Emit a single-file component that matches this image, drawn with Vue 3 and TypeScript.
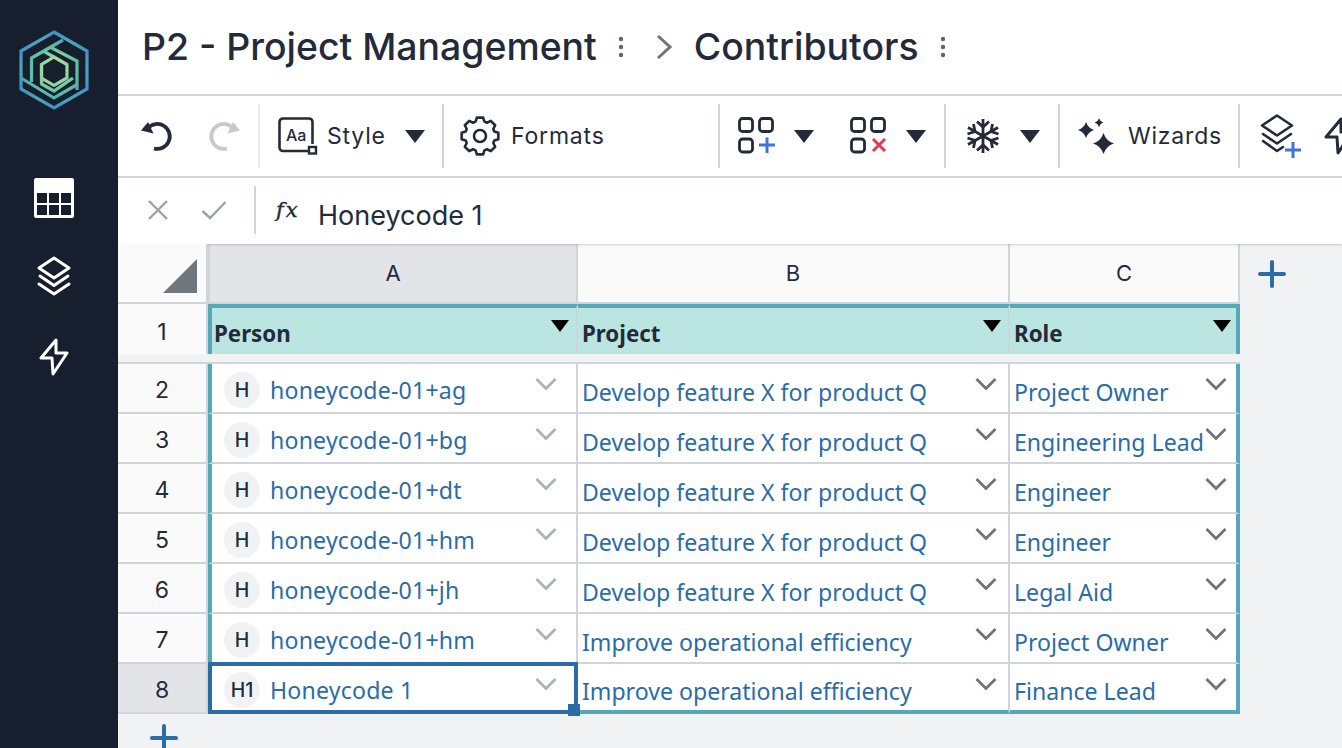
<template>
  <div class="app">
    <aside class="rail">
      <svg class="logo" viewBox="16 28 76 84" fill="none">
        <defs>
          <radialGradient id="logo-grad" gradientUnits="userSpaceOnUse" cx="54" cy="70" r="40">
            <stop offset="15%" stop-color="#c6e59b" />
            <stop offset="55%" stop-color="#62c3a4" />
            <stop offset="100%" stop-color="#3b8cc9" />
          </radialGradient>
        </defs>
        <g stroke="url(#logo-grad)" stroke-width="3.2" stroke-linejoin="miter">
          <path d="M54 32 87 51V89L54 108 21 89V51Z" />
          <path d="M54 57 67 64.5V78L54 85.500 41.500 78V64.500Z" />
          <path d="M63 40 31.500 58V82" />
          <path d="M50 47 77 61V90" />
          <path d="M44 51.500 54 57" />
          <path d="M21 78 54 98 78 84" />
          <path d="M41.500 64V84L54 91 73 78" />
        </g>
      </svg>
      <svg class="rail-icon rail-icon--table" viewBox="0 0 40 40">
        <path fill="#fff" fill-rule="evenodd" d="M2 0H38A2 2 0 0 1 40 2V38A2 2 0 0 1 38 40H2A2 2 0 0 1 0 38V2A2 2 0 0 1 2 0ZM3 15V25H13V15ZM15 15V25H25V15ZM27 15V25H37V15ZM3 27V37H13V27ZM15 27V37H25V27ZM27 27V37H37V27Z" />
      </svg>
      <svg class="rail-icon rail-icon--layers" viewBox="0 0 34 40" fill="none" stroke="#fff" stroke-width="3" stroke-linejoin="round" stroke-linecap="round">
        <path d="M17 2 32 12 17 22 2 12Z" />
        <path d="M3 20 17 29.500 31 20" />
        <path d="M2 28 17 38 32 28" />
      </svg>
      <svg class="rail-icon rail-icon--bolt" viewBox="0 0 30 38" fill="none" stroke="#fff" stroke-width="3" stroke-linejoin="round">
        <path d="M17 2 2 20H13L14 36 28 15H17Z" />
      </svg>
    </aside>

    <main class="main">
      <header class="titlebar">
        <h1 class="title">P2 - Project Management</h1>
        <svg class="kebab" viewBox="0 0 6 22"><circle cx="3" cy="3" r="2.200" /><circle cx="3" cy="11" r="2.200" /><circle cx="3" cy="19" r="2.200" /></svg>
        <svg class="crumb" viewBox="0 0 16 26" fill="none" stroke="#6f747c" stroke-width="3"><path d="M2 2 14 13 2 24" /></svg>
        <h1 class="title">Contributors</h1>
        <svg class="kebab" viewBox="0 0 6 22"><circle cx="3" cy="3" r="2.200" /><circle cx="3" cy="11" r="2.200" /><circle cx="3" cy="19" r="2.200" /></svg>
      </header>

      <div class="toolbar">
        <div class="group group--history">
          <svg class="ic32" viewBox="0 0 32 32" fill="none" stroke="#232b3a" stroke-width="3.800">
            <path d="M7 8A12.500 12.500 0 1 1 13 28.500" />
            <path fill="#232b3a" stroke="none" d="M0 10.500 7 2 12.500 13.500Z" />
          </svg>
          <svg class="ic32" viewBox="0 0 32 32" fill="none" stroke="#c6c9cd" stroke-width="3.800">
            <path d="M25 8A12.500 12.500 0 1 0 19 28.500" />
            <path fill="#c6c9cd" stroke="none" d="M32 10.500 25 2 19.500 13.500Z" />
          </svg>
        </div>
        <div class="group group--style">
          <svg class="ic-style" viewBox="0 0 40 38" fill="none">
            <path stroke="#232b3a" stroke-width="2.600" d="M30 34H5A3.500 3.500 0 0 1 1.500 30.500V5A3.500 3.500 0 0 1 5 1.500H31A3.500 3.500 0 0 1 34.500 5V27" />
            <text x="8" y="24" class="aa">Aa</text>
            <rect x="31" y="30" width="7" height="6.500" stroke="#232b3a" stroke-width="2.400" />
          </svg>
          <span class="tool-label">Style</span>
          <i class="caret caret--style"></i>
        </div>
        <div class="group group--formats">
          <svg class="ic-gear" viewBox="0 0 40 40" fill="none" stroke="#232b3a" stroke-width="2.600" stroke-linejoin="round">
            <circle cx="20" cy="20" r="6" />
            <path :d="gearPath" />
          </svg>
          <span class="tool-label">Formats</span>
        </div>
        <div class="group group--rows">
          <svg class="ic-grid" viewBox="0 0 38 38" fill="none">
            <g stroke="#232b3a" stroke-width="2.800">
              <rect x="1.500" y="1.500" width="13" height="13" rx="3" />
              <rect x="21.500" y="1.500" width="13" height="13" rx="3" />
              <rect x="1.500" y="22" width="13" height="13" rx="3" />
            </g>
            <path stroke="#3f74d8" stroke-width="3" d="M21 28H37M29 20.500V36" />
          </svg>
          <i class="caret"></i>
          <svg class="ic-grid ic-grid--del" viewBox="0 0 38 38" fill="none">
            <g stroke="#232b3a" stroke-width="2.800">
              <rect x="1.500" y="1.500" width="13" height="13" rx="3" />
              <rect x="21.500" y="1.500" width="13" height="13" rx="3" />
              <rect x="1.500" y="22" width="13" height="13" rx="3" />
            </g>
            <path stroke="#dd3a56" stroke-width="3" d="M23 22 35 34M35 22 23 34" />
          </svg>
          <i class="caret"></i>
        </div>
        <div class="group group--freeze">
          <svg class="ic-snow" viewBox="0 0 34 36" fill="none" stroke="#232b3a" stroke-width="2.800">
            <path d="M17 1V35M2 9.500 32 26.500M32 9.500 2 26.500" />
            <path d="M11 3.500 17 9 23 3.500M11 32.500 17 27 23 32.500" />
            <path d="M1.500 16 9 13.500 7.500 6M32.500 16 25 13.500 26.500 6" />
            <path d="M1.500 20 9 22.500 7.500 30M32.500 20 25 22.500 26.500 30" />
          </svg>
          <i class="caret caret--freeze"></i>
        </div>
        <div class="group group--wizards">
          <svg class="ic-spark" viewBox="0 0 36 36" fill="#232b3a">
            <path d="M25.500 15Q28 23 36 25.500 28 28 25.500 36 23 28 15 25.500 23 23 25.500 15Z" />
            <path d="M8 4Q10 10 16 12 10 14 8 20 6 14 0 12 6 10 8 4Z" />
            <path d="M21 0Q22 3.500 25.500 4.500 22 5.500 21 9.500 20 5.500 16.500 4.500 20 3.500 21 0Z" />
          </svg>
          <span class="tool-label">Wizards</span>
        </div>
        <div class="group group--last">
          <svg class="ic-addlayer" viewBox="0 0 42 44" fill="none">
            <g stroke="#232b3a" stroke-width="2.600" stroke-linejoin="round" stroke-linecap="round">
              <path d="M17 1.500 32 11.500 17 21.500 2 11.500Z" />
              <path d="M3 20 17 29.500 31 20" />
              <path d="M3 27 17 37 23 33" />
            </g>
            <path stroke="#3f74d8" stroke-width="3" d="M25 36H41M33 28V44" />
          </svg>
          <svg class="ic-clipbolt" viewBox="0 0 30 38" fill="none" stroke="#232b3a" stroke-width="3" stroke-linejoin="round">
            <path d="M17 2 2 20H13L14 36 28 15H17Z" />
          </svg>
        </div>
      </div>

      <div class="formula">
        <svg class="fx-btn" viewBox="0 0 22 22" fill="none" stroke="#9ea1a5" stroke-width="2.400"><path d="M2 2 20 20M20 2 2 20" /></svg>
        <svg class="fx-btn" viewBox="0 0 26 22" fill="none" stroke="#9ea1a5" stroke-width="2.400"><path d="M1.500 12 9 19 24.500 3" /></svg>
        <span class="fx-sep"></span>
        <span class="fx">fx</span>
        <span class="fx-value">Honeycode 1</span>
      </div>

      <section class="sheet">
        <div class="corner"><i class="corner-tri"></i></div>
        <div class="col-head col-head--on">A</div>
        <div class="col-head">B</div>
        <div class="col-head">C</div>
        <div class="add-col"><svg class="plus" viewBox="0 0 28 28" fill="none" stroke="#2a6ca8" stroke-width="4" stroke-linecap="round"><path d="M2 14H26M14 2V26" /></svg></div>

        <div class="row-num row-num--head">1</div>
        <div v-for="(h, i) in headers" :key="h" class="hcell" :class="{ 'hcell--first': i === 0, 'hcell--last': i === 2 }">
          <span>{{ h }}</span>
          <i class="hcaret"></i>
        </div>
        <div class="blank"></div>

        <div class="strip"></div>

        <template v-for="(r, idx) in rows" :key="idx">
          <div class="row-num" :class="{ 'row-num--on': idx === rows.length - 1 }">{{ idx + 2 }}</div>
          <div class="cell cell--first" :class="{ 'cell--sel': idx === rows.length - 1 }">
            <span class="avatar">{{ r.initials }}</span>
            <span class="person">{{ r.person }}</span>
            <svg class="chev chev--light" viewBox="0 0 22 14" fill="none"><path d="M1.500 2 11 11.500 20.500 2" /></svg>
            <i v-if="idx === rows.length - 1" class="handle"></i>
          </div>
          <div class="cell cell--text" :class="{ 'cell--bottom': idx === rows.length - 1 }">
            <span class="link">{{ r.project }}</span>
            <svg class="chev" viewBox="0 0 22 14" fill="none"><path d="M1.500 2 11 11.500 20.500 2" /></svg>
          </div>
          <div class="cell cell--text cell--last" :class="{ 'cell--bottom': idx === rows.length - 1 }">
            <span class="link">{{ r.role }}</span>
            <svg class="chev" viewBox="0 0 22 14" fill="none"><path d="M1.500 2 11 11.500 20.500 2" /></svg>
          </div>
          <div class="blank"></div>
        </template>
        <div class="add-row"><svg class="plus" viewBox="0 0 28 28" fill="none" stroke="#2a6ca8" stroke-width="4" stroke-linecap="round"><path d="M2 14H26M14 2V26" /></svg></div>
      </section>
    </main>
  </div>
</template>

<script setup lang="ts">
interface Row {
  initials: string
  person: string
  project: string
  role: string
}

const headers = ['Person', 'Project', 'Role']

const featureX = 'Develop feature X for product Q'
const efficiency = 'Improve operational efficiency'

const rows: Row[] = [
  { initials: 'H', person: 'honeycode-01+ag', project: featureX, role: 'Project Owner' },
  { initials: 'H', person: 'honeycode-01+bg', project: featureX, role: 'Engineering Lead' },
  { initials: 'H', person: 'honeycode-01+dt', project: featureX, role: 'Engineer' },
  { initials: 'H', person: 'honeycode-01+hm', project: featureX, role: 'Engineer' },
  { initials: 'H', person: 'honeycode-01+jh', project: featureX, role: 'Legal Aid' },
  { initials: 'H', person: 'honeycode-01+hm', project: efficiency, role: 'Project Owner' },
  { initials: 'H1', person: 'Honeycode 1', project: efficiency, role: 'Finance Lead' },
]

// 8 teeth round the centre of the 40x40 icon
const gearPath = (() => {
  const pts: string[] = []
  for (let i = 0; i < 8; i++) {
    const a = (i * Math.PI) / 4 - Math.PI / 2
    const offsets: [number, number][] = [
      [-0.3, 15],
      [-0.17, 18.6],
      [0.17, 18.6],
      [0.3, 15],
    ]
    for (const [da, r] of offsets) {
      pts.push(`${(20 + r * Math.cos(a + da)).toFixed(2)} ${(20 + r * Math.sin(a + da)).toFixed(2)}`)
    }
  }
  return `M${pts.join(' ')}Z`
})()
</script>

<style>
html,
body {
  margin: 0;
  height: 748px;
  overflow: hidden;
  background: #f1f2f4;
}
</style>

<style scoped>
.app {
  display: flex;
  height: 748px;
  overflow: hidden;
  font-family: Inter, "Liberation Sans", sans-serif;
  color: #232b3a;
}
.rail {
  flex: 0 0 118px;
  background: #171e2d;
  display: flex;
  flex-direction: column;
  align-items: center;
  padding: 28px 10px 0 0;
  box-sizing: border-box;
}
.logo {
  width: 76px;
  height: 84px;
  flex: none;
}
.rail-icon {
  display: block;
  flex: none;
}
.rail-icon--table {
  width: 40px;
  height: 40px;
  margin-top: 66px;
}
.rail-icon--layers {
  width: 34px;
  height: 40px;
  margin-top: 38px;
}
.rail-icon--bolt {
  width: 30px;
  height: 38px;
  margin-top: 42px;
}

.main {
  flex: 1;
  min-width: 0;
  display: flex;
  flex-direction: column;
}
.titlebar {
  flex: none;
  height: 96px;
  box-sizing: border-box;
  border-bottom: 2px solid #d1d4d8;
  background: #fff;
  display: flex;
  align-items: center;
  padding-left: 24px;
}
.title {
  margin: 0;
  font-size: 37.4px;
  font-weight: 500;
  line-height: 44px;
  color: #232b3a;
  white-space: nowrap;
}
.kebab {
  width: 6px;
  height: 22px;
  margin-left: 21px;
  fill: #5f646d;
}
.crumb {
  width: 16px;
  height: 26px;
  margin: 0 22px 0 32px;
}

.toolbar {
  flex: none;
  height: 82px;
  box-sizing: border-box;
  border-bottom: 2px solid #d1d4d8;
  background: #fff;
  display: flex;
  align-items: center;
  overflow: hidden;
}
.group {
  height: 64px;
  box-sizing: border-box;
  flex: none;
  display: flex;
  align-items: center;
  border-right: 2px solid #d1d4d8;
}
.group--history {
  width: 142px;
  padding-left: 23px;
  gap: 35px;
  border-right-color: #e9eaec;
}
.group--style {
  width: 184px;
  padding-left: 18px;
}
.group--formats {
  width: 276px;
  padding-left: 16px;
}
.group--rows {
  width: 226px;
  padding-left: 18px;
}
.group--freeze {
  width: 114px;
  padding-left: 20px;
}
.group--wizards {
  width: 180px;
  padding-left: 18px;
}
.group--last {
  flex: 1;
  padding-left: 20px;
  border-right: 0;
}
.ic32 {
  width: 32px;
  height: 32px;
}
.ic-style {
  width: 40px;
  height: 38px;
  flex: none;
}
.aa {
  font-family: Inter, "Liberation Sans", sans-serif;
  font-size: 16px;
  font-weight: 500;
  fill: #232b3a;
}
.tool-label {
  font-size: 23px;
  line-height: 30px;
  letter-spacing: 0.8px;
  color: #232b3a;
  margin-left: 9px;
  white-space: nowrap;
}
.caret {
  flex: none;
  width: 0;
  height: 0;
  border-left: 10px solid transparent;
  border-right: 10px solid transparent;
  border-top: 13px solid #232b3a;
  margin-left: 18px;
}
.caret--style {
  margin-left: 19px;
}
.caret--freeze {
  margin-left: 20px;
}
.ic-gear {
  width: 40px;
  height: 40px;
  flex: none;
}
.group--formats .tool-label {
  margin-left: 11px;
}
.ic-grid {
  width: 38px;
  height: 38px;
  flex: none;
}
.ic-grid--del {
  margin-left: 36px;
}
.ic-snow {
  width: 34px;
  height: 36px;
  flex: none;
}
.ic-spark {
  width: 36px;
  height: 36px;
  flex: none;
}
.group--wizards .tool-label {
  margin-left: 14px;
}
.ic-addlayer {
  width: 42px;
  height: 44px;
  flex: none;
}
.ic-clipbolt {
  width: 30px;
  height: 38px;
  flex: none;
  margin-left: 22px;
}

.formula {
  flex: none;
  height: 66px;
  box-sizing: border-box;
  background: #fff;
  box-shadow: 0 1px 2px rgba(0, 0, 0, 0.18);
  position: relative;
  display: flex;
  align-items: center;
  padding-left: 29px;
}
.fx-btn {
  width: 22px;
  height: 22px;
  flex: none;
  margin-top: -2px;
}
.fx-btn + .fx-btn {
  width: 26px;
  margin-left: 32px;
}
.fx-sep {
  width: 2px;
  height: 48px;
  background: #d1d4d8;
  margin-left: 27px;
  margin-top: -2px;
}
.fx {
  font-family: "DejaVu Serif", "Liberation Serif", serif;
  font-style: italic;
  font-size: 21px;
  letter-spacing: 2px;
  -webkit-text-stroke: 0.4px #232b3a;
  margin: -3px 0 0 20px;
  width: 29px;
  color: #232b3a;
}
.fx-value {
  font-size: 27px;
  margin: 8px 0 0 13px;
}

.sheet {
  flex: 1;
  min-height: 0;
  overflow: hidden;
  display: grid;
  grid-template-columns: 90px 370px 432px 230px 1fr;
  grid-template-rows: 60px 50px 10px repeat(7, 50px) 1fr;
  background: #f1f2f4;
  font-family: "Noto Sans", "Open Sans", sans-serif;
}
.corner {
  background: #fafafa;
  border-right: 2px solid #d1d4d8;
  border-bottom: 2px solid #d1d4d8;
  position: relative;
}
.corner-tri {
  position: absolute;
  right: 9px;
  bottom: 9px;
  width: 0;
  height: 0;
  border-left: 34px solid transparent;
  border-bottom: 34px solid #6f767e;
}
.col-head {
  background: #fafafa;
  border-right: 2px solid #d1d4d8;
  border-bottom: 2px solid #d1d4d8;
  display: flex;
  align-items: center;
  justify-content: center;
  font-family: Inter, sans-serif;
  font-size: 22px;
  color: #232b3a;
  box-sizing: border-box;
}
.col-head--on {
  background: #e2e4e8;
  border-left: 2px solid #d1d4d8;
}
.add-col {
  padding: 16px 0 0 18px;
}
.plus {
  width: 28px;
  height: 28px;
  display: block;
}
.row-num {
  background: #fafafa;
  border-right: 2px solid #d1d4d8;
  border-bottom: 2px solid #d1d4d8;
  display: flex;
  align-items: center;
  justify-content: center;
  font-family: Inter, sans-serif;
  font-size: 23px;
  color: #232b3a;
  box-sizing: border-box;
  padding-top: 3px;
}
.row-num--head {
  padding-top: 6px;
  border-bottom: 0;
}
.row-num--on {
  background: #e2e4e8;
}
.hcell {
  background: #bbe5e1;
  border-top: 4px solid #54a8b7;
  border-right: 2px solid #d1d4d8;
  box-sizing: border-box;
  position: relative;
  display: flex;
  align-items: center;
  padding: 4px 0 0 4px;
  font-size: 22.300px;
  font-weight: 700;
  color: #232b3a;
}
.hcell--first {
  border-left: 4px solid #54a8b7;
  padding-left: 2px;
}
.hcell--last {
  border-right: 4px solid #54a8b7;
}
.hcaret {
  position: absolute;
  top: 12px;
  right: 7px;
  width: 0;
  height: 0;
  border-left: 9.500px solid transparent;
  border-right: 9.500px solid transparent;
  border-top: 12px solid #000;
}
.hcell--last .hcaret {
  right: 5px;
}
.blank {
  min-width: 0;
}
.strip {
  grid-column: 1 / 6;
  box-sizing: border-box;
  background: linear-gradient(#f1f2f4 8px, #d1d4d8 8px);
  margin-right: 102px;
}
.cell {
  background: #fff;
  border-right: 2px solid #d1d4d8;
  border-bottom: 2px solid #d1d4d8;
  box-sizing: border-box;
  position: relative;
  display: flex;
  align-items: center;
  min-width: 0;
}
.cell--first {
  border-left: 4px solid #54a8b7;
  padding: 4px 0 0 12px;
}
.cell--text {
  padding: 7px 0 0 4px;
}
.cell--last {
  border-right: 4px solid #54a8b7;
}
.cell--bottom {
  border-bottom: 4px solid #54a8b7;
}
.cell--sel {
  border: 4px solid #2a6ca8;
  margin-top: -2px;
  padding-left: 12px;
  z-index: 2;
}
.avatar {
  flex: none;
  width: 36px;
  height: 36px;
  border-radius: 50%;
  background: #f1f2f4;
  display: flex;
  align-items: center;
  justify-content: center;
  font-family: Inter, sans-serif;
  font-size: 19.500px;
  font-weight: 500;
  color: #232b3a;
}
.person {
  font-size: 23.100px;
  letter-spacing: 0.2px;
  color: #2a6ca8;
  margin-left: 10px;
  white-space: nowrap;
}
.link {
  font-size: 23.100px;
  color: #2a6ca8;
  white-space: nowrap;
}
.chev {
  position: absolute;
  top: 13px;
  right: 11px;
  width: 22px;
  height: 14px;
  stroke: #6f747c;
  stroke-width: 2.800;
}
.cell--last .chev {
  right: 9px;
}
.chev--light {
  stroke: #aeb1b6;
  right: 19px;
}
.cell--sel .chev--light {
  top: 11px;
  right: 17px;
}
.handle {
  position: absolute;
  right: -6px;
  bottom: -6px;
  width: 12px;
  height: 12px;
  background: #2a6ca8;
}
.add-row {
  grid-column: 1 / 5;
  padding: 10px 0 0 32px;
}
</style>
